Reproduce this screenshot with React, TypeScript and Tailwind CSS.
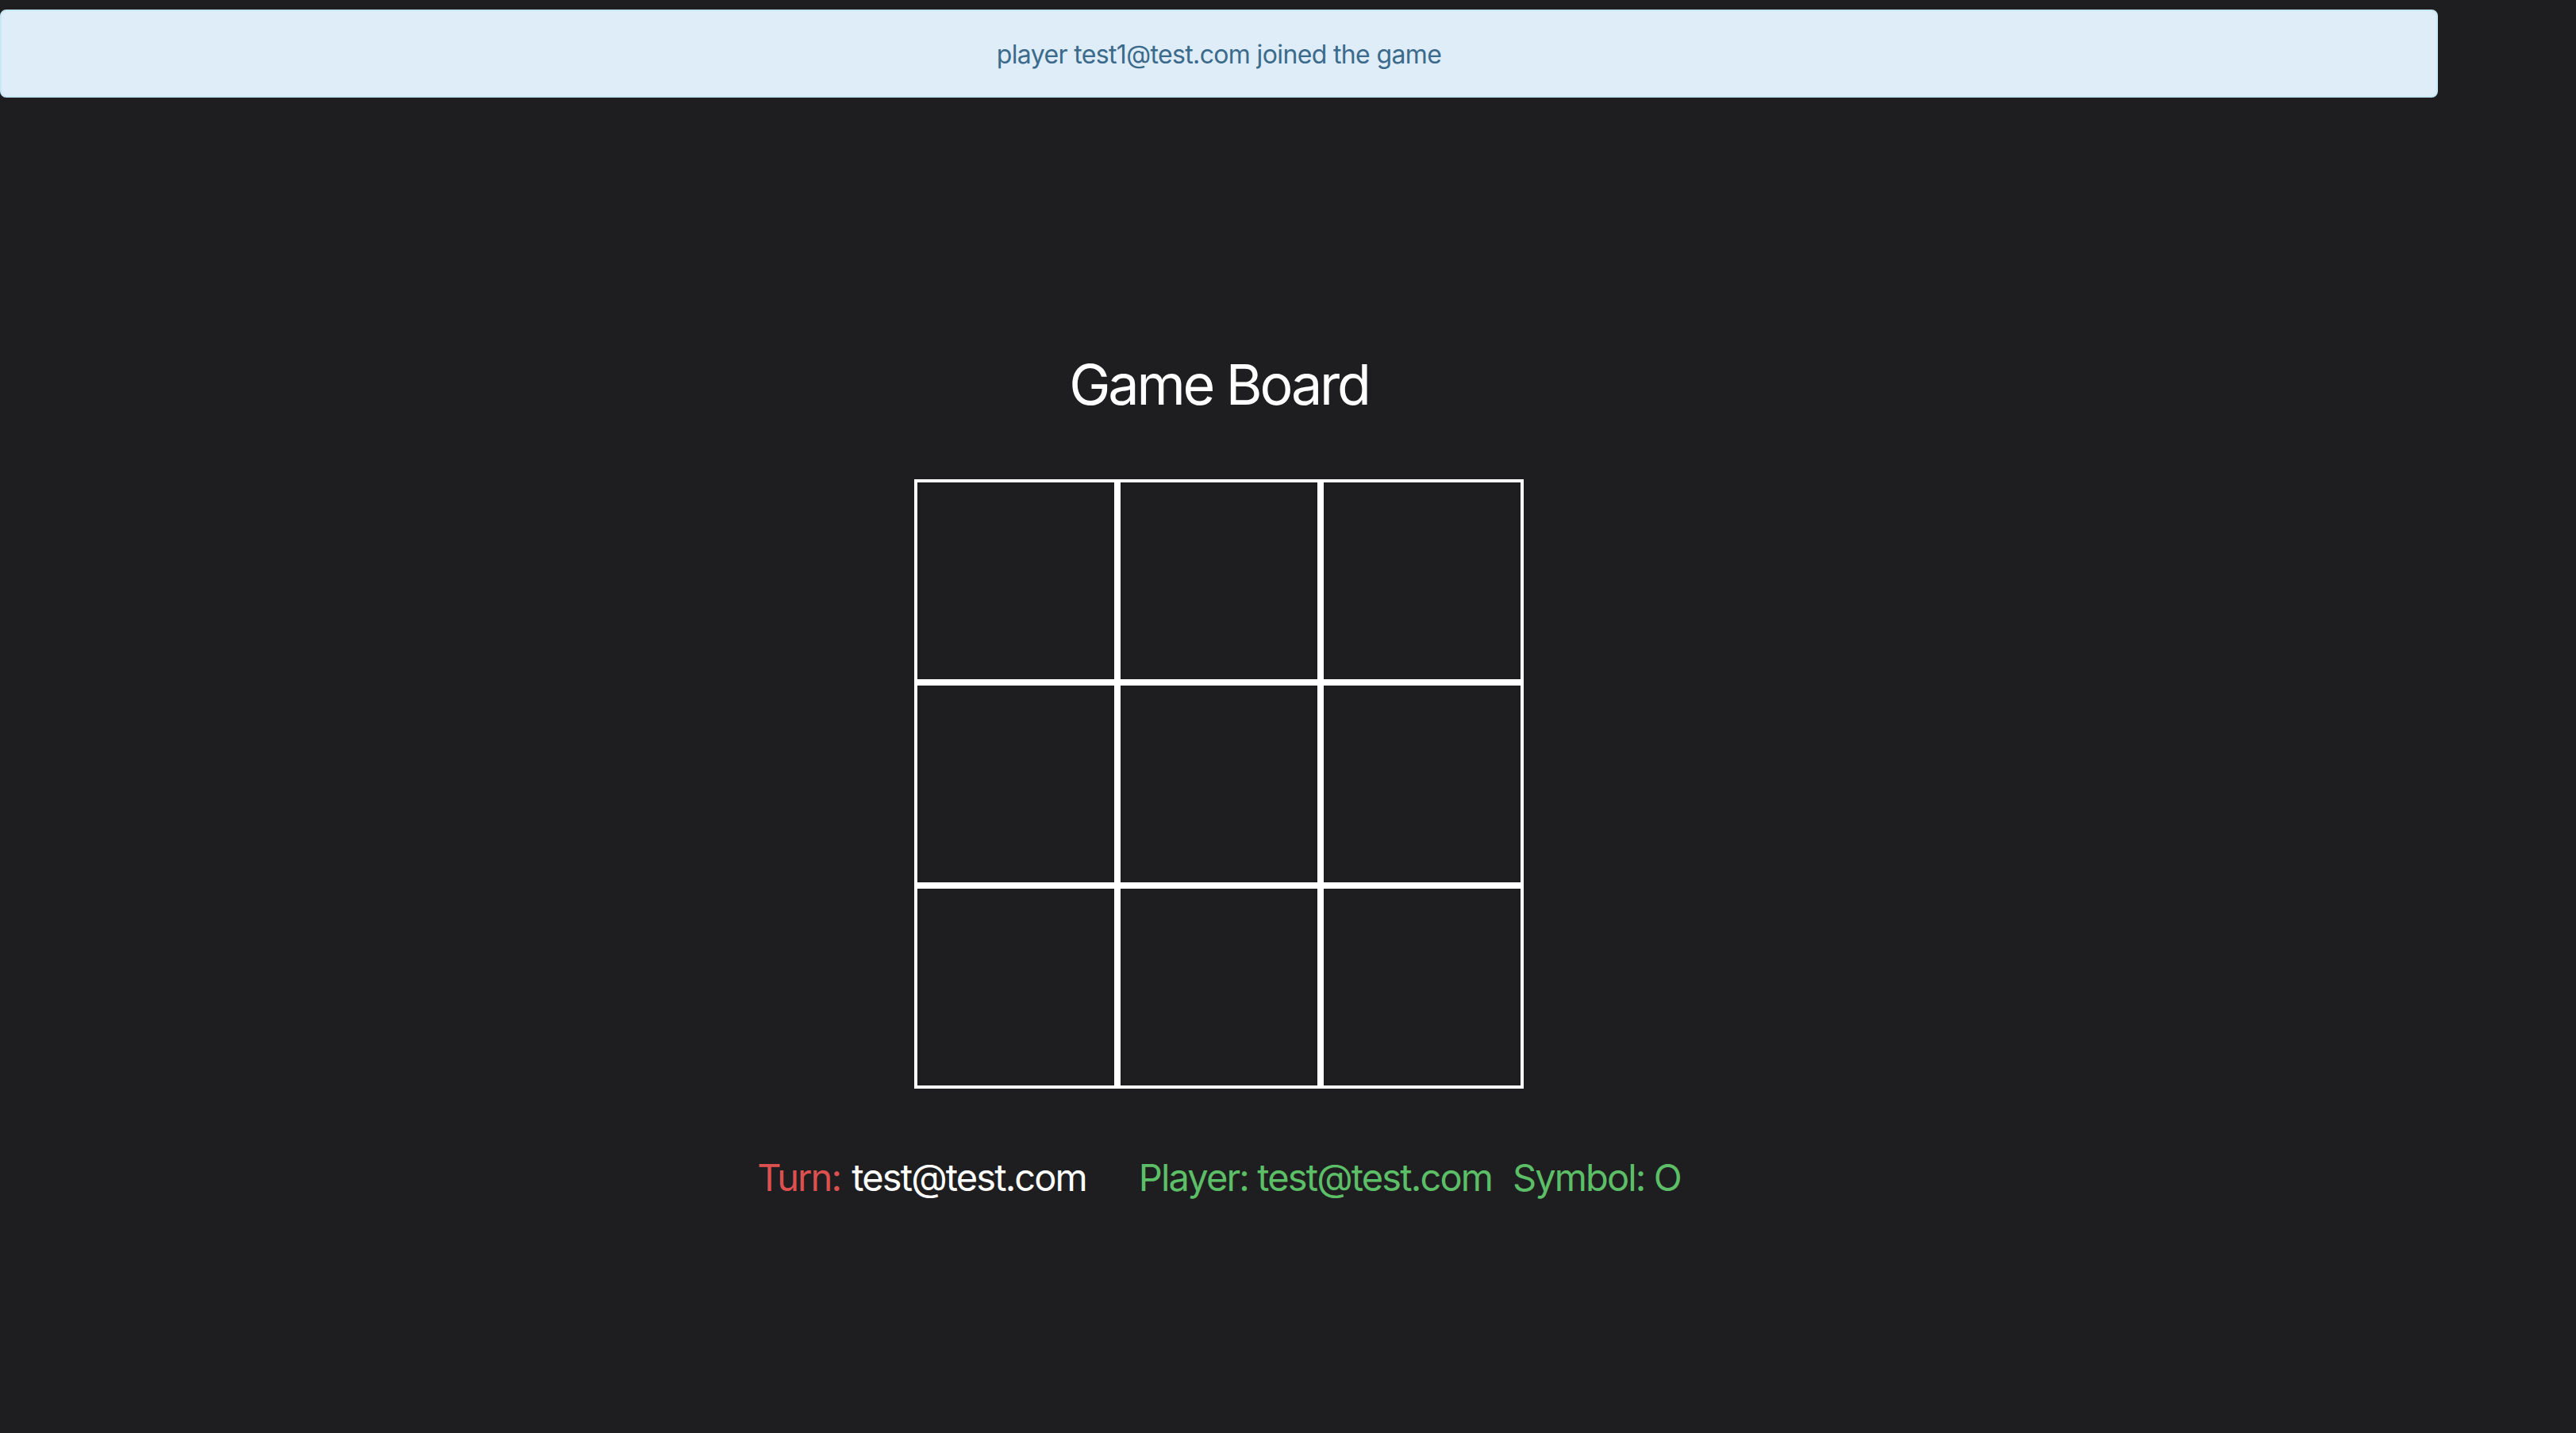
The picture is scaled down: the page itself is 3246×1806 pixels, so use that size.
import React from "react";

export default function App() {
  const cells = Array.from({ length: 9 });
  return (
    <div className="min-h-[1806px] w-full bg-[#1e1e20] [font-family:Inter,'Noto_Sans',sans-serif]">
      <div className="flex w-[3072px] flex-col items-center pt-[12px]">
        <div className="flex h-[111px] w-full items-center justify-center rounded-[8px] border-2 border-[#c6e8f4] bg-[#deedf8] pt-[2px] text-[32px] tracking-[-0.02em] text-[#3b6a8b]">
          player test1@test.com joined the game
        </div>
        <h2 className="mt-[327px] text-[70px] leading-none font-normal tracking-[-0.045em] text-white">Game Board</h2>
        <div className="mt-[84px] grid w-[768px] grid-cols-3">
          {cells.map((_, i) => (
            <div key={i} className="h-[256px] w-[256px] border-4 border-white bg-[#1e1e20]" />
          ))}
        </div>
        <div className="mt-[88px] flex text-[47px] leading-none tracking-[-0.04em]">
          <span className="text-[#dc5050]">Turn:</span>
          <span className="ml-[14px] text-white">test@test.com</span>
          <span className="ml-[66px] text-[#5cbf67]">Player: test@test.com</span>
          <span className="ml-[26px] text-[#5cbf67]">Symbol: O</span>
        </div>
      </div>
    </div>
  );
}
